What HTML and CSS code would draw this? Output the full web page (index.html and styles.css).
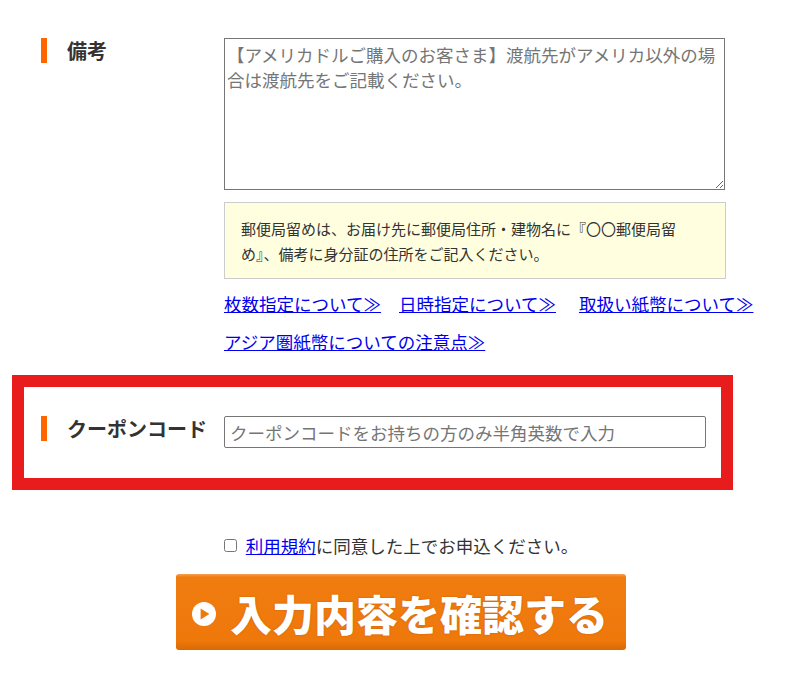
FILE: index.html
```html
<!DOCTYPE html>
<html lang="ja">
<head>
    <meta charset="UTF-8">
    <meta name="viewport" content="width=device-width, initial-scale=1.0">
    <title>お申込みフォーム</title>
    <link rel="stylesheet" href="styles.css">
</head>
<body>
    <div class="page">
        <div class="form-row">
            <div class="form-label"><span>備考</span></div>
            <div class="form-field">
                <textarea class="remarks" placeholder="【アメリカドルご購入のお客さま】渡航先がアメリカ以外の場合は渡航先をご記載ください。"></textarea>
                <div class="notice">郵便局留めは、お届け先に郵便局住所・建物名に『〇〇郵便局留め』、備考に身分証の住所をご記入ください。</div>
                <div class="guide-links">
                    <div class="link-line">
                        <a href="#" class="first">枚数指定について≫</a><a href="#" class="second">日時指定について≫</a><a href="#">取扱い紙幣について≫</a>
                    </div>
                    <div class="link-line">
                        <a href="#">アジア圏紙幣についての注意点≫</a>
                    </div>
                </div>
            </div>
        </div>

        <div class="coupon-box">
            <div class="form-row">
                <div class="form-label"><span>クーポンコード</span></div>
                <div class="form-field">
                    <input type="text" class="coupon-input" placeholder="クーポンコードをお持ちの方のみ半角英数で入力">
                </div>
            </div>
        </div>

        <div class="agree">
            <input type="checkbox" id="agree-check" class="agree-check">
            <label for="agree-check"><a href="#">利用規約</a>に同意した上でお申込ください。</label>
        </div>

        <div class="submit-area">
            <button class="submit-button" type="button">
                <svg class="submit-icon" viewBox="0 0 24 24" width="24" height="24">
                    <circle cx="12" cy="12" r="12" fill="#fff"/>
                    <path d="M8.6 6.6 L17.4 12 L8.6 17.4 Z" fill="#ef780b"/>
                </svg>
                <span>入力内容を確認する</span>
            </button>
        </div>
    </div>
</body>
</html>
```

FILE: styles.css
```css
body {
    margin: 0;
    font-family: "Noto Sans CJK JP", "Noto Sans", sans-serif;
    font-size: 17.5px;
    color: #333;
    background: #fff;
}
.page {
    width: 778px;
    margin-left: 12px;
    padding-top: 38px;
}
.form-row {
    display: flex;
    align-items: flex-start;
}
.page > .form-row {
    padding-left: 29px;
}
.form-label {
    width: 183px;
    flex-shrink: 0;
}
.form-label span {
    display: block;
    height: 25px;
    line-height: 25px;
    padding-left: 20px;
    border-left: 6px solid #ff6600;
    font-size: 20px;
    font-weight: bold;
    color: #333;
}
.form-field {
    flex: 1;
}
.remarks {
    display: block;
    width: 501px;
    height: 152px;
    box-sizing: border-box;
    padding: 3px 2px;
    border: 1px solid #767676;
    font-family: inherit;
    font-size: 17.5px;
    line-height: 25px;
}
.remarks::placeholder,
.coupon-input::placeholder {
    color: #757575;
}
.notice {
    width: 502px;
    box-sizing: border-box;
    margin-top: 12px;
    padding: 13px 16px 12px;
    border: 1px solid #cccccc;
    background: #ffffe0;
    font-size: 15px;
    line-height: 25px;
    color: #333;
}
.guide-links {
    margin-top: 6px;
}
.link-line {
    height: 38px;
    line-height: 38px;
    white-space: nowrap;
}
.guide-links a {
    color: #0000ee;
}
.guide-links a.first {
    margin-right: 18px;
}
.guide-links a.second {
    margin-right: 23px;
}
.coupon-box {
    width: 721px;
    box-sizing: border-box;
    margin-top: 14px;
    padding: 29px 0 30px 17px;
    border: 12px solid #e81c1c;
}
.coupon-input {
    display: block;
    width: 482px;
    height: 32px;
    box-sizing: border-box;
    padding: 0 5px;
    border: 1px solid #767676;
    border-radius: 2px;
    font-family: inherit;
    font-size: 17.5px;
}
.agree {
    display: flex;
    align-items: center;
    justify-content: center;
    margin-top: 43px;
    height: 25px;
    line-height: 25px;
}
.agree-check {
    width: 13px;
    height: 13px;
    margin: 0 9px 0 0;
}
.agree a {
    color: #0000ee;
}
.submit-area {
    display: flex;
    justify-content: center;
    margin-top: 16px;
}
.submit-button {
    display: flex;
    align-items: center;
    width: 450px;
    height: 76px;
    padding: 0 0 0 16px;
    border: none;
    border-radius: 3px;
    background: linear-gradient(#f6a055 0, #f07c10 4%, #ef780b 88%, #d86a02 100%);
    color: #fff;
    font-family: "Noto Sans CJK JP", sans-serif;
    font-size: 42px;
    font-weight: 900;
    text-shadow: 0 0 2px rgba(120, 50, 0, 0.35);
    cursor: pointer;
}
.submit-icon {
    flex-shrink: 0;
    margin: 4px 14px 0 0;
}
```
